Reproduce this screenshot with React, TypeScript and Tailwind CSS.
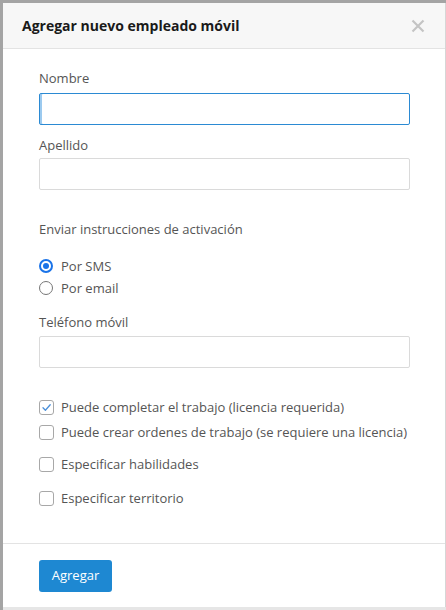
import React from "react";

const font = { fontFamily: '"Open Sans", "Liberation Sans", sans-serif' };

function Box({ checked }: { checked?: boolean }) {
  return (
    <span className="flex h-[15px] w-[15px] shrink-0 items-center justify-center rounded-[3px] border border-[#a8a8a8] bg-white">
      {checked && (
        <svg width="11" height="11" viewBox="0 0 11 11" fill="none">
          <path d="M2 5.8l2.4 2.4L9.2 2.8" stroke="#4a8fd9" strokeWidth="1.3" strokeLinecap="round" strokeLinejoin="round" />
        </svg>
      )}
    </span>
  );
}

function Radio({ checked }: { checked?: boolean }) {
  return (
    <span
      className={
        "flex h-[14px] w-[14px] shrink-0 items-center justify-center rounded-full bg-white " +
        (checked ? "border-2 border-[#1a73e8]" : "border border-[#767676]")
      }
    >
      {checked && <span className="h-[6px] w-[6px] rounded-full bg-[#1a73e8]" />}
    </span>
  );
}

export default function App() {
  return (
    <div className="flex h-[610px] w-[446px] flex-col bg-[#a4a4a4] pl-[3px] pt-[3px]" style={font}>
      <div className="flex h-[604px] flex-col border-r border-[#d6d6d6] bg-white">
        {/* header */}
        <div className="flex h-[46px] items-center justify-between border-b border-[#e3e3e3] bg-[#f7f7f7] pl-[19px] pr-[20px]">
          <h2 className="text-[14px] font-bold text-[#1a1a1a]">Agregar nuevo empleado móvil</h2>
          <svg width="14" height="14" viewBox="0 0 14 14">
            <path d="M1.5 1.5l11 11M12.5 1.5l-11 11" stroke="#c4c4c4" strokeWidth="2.2" />
          </svg>
        </div>

        {/* body */}
        <div className="flex-1 pl-[36px] pr-[35px] pt-[20px] text-[13px] leading-[18px] text-[#555]">
          <label className="block">Nombre</label>
          <div className="mt-[6px] h-[32px] rounded-[2px] border border-[#2b8ad3] shadow-[inset_2px_0_0_#9ccaef]" />
          <label className="mt-[11px] block">Apellido</label>
          <div className="mt-[4px] h-[32px] rounded-[2px] border border-[#dadada]" />

          <div className="mt-[30px]">Enviar instrucciones de activación</div>
          <div className="mt-[19px] flex items-center gap-[8px]">
            <Radio checked />
            <span>Por SMS</span>
          </div>
          <div className="mt-[4px] flex items-center gap-[8px]">
            <Radio />
            <span>Por email</span>
          </div>

          <label className="mt-[16px] block">Teléfono móvil</label>
          <div className="mt-[5px] h-[32px] rounded-[2px] border border-[#dadada]" />

          <div className="mt-[30px] flex items-center gap-[7px]">
            <Box checked />
            <span>Puede completar el trabajo (licencia requerida)</span>
          </div>
          <div className="mt-[7px] flex items-center gap-[7px]">
            <Box />
            <span>Puede crear ordenes de trabajo (se requiere una licencia)</span>
          </div>
          <div className="mt-[14px] flex items-center gap-[7px]">
            <Box />
            <span>Especificar habilidades</span>
          </div>
          <div className="mt-[16px] flex items-center gap-[7px]">
            <Box />
            <span>Especificar territorio</span>
          </div>
        </div>

        {/* footer */}
        <div className="h-[64px] border-t border-[#e3e3e3] pl-[36px] pt-[16px]">
          <button className="h-[32px] w-[73px] rounded-[3px] bg-[#1e88d2] text-[13px] text-white">Agregar</button>
        </div>
      </div>
      <div className="h-[3px] bg-[#e6e6e6]" />
    </div>
  );
}
